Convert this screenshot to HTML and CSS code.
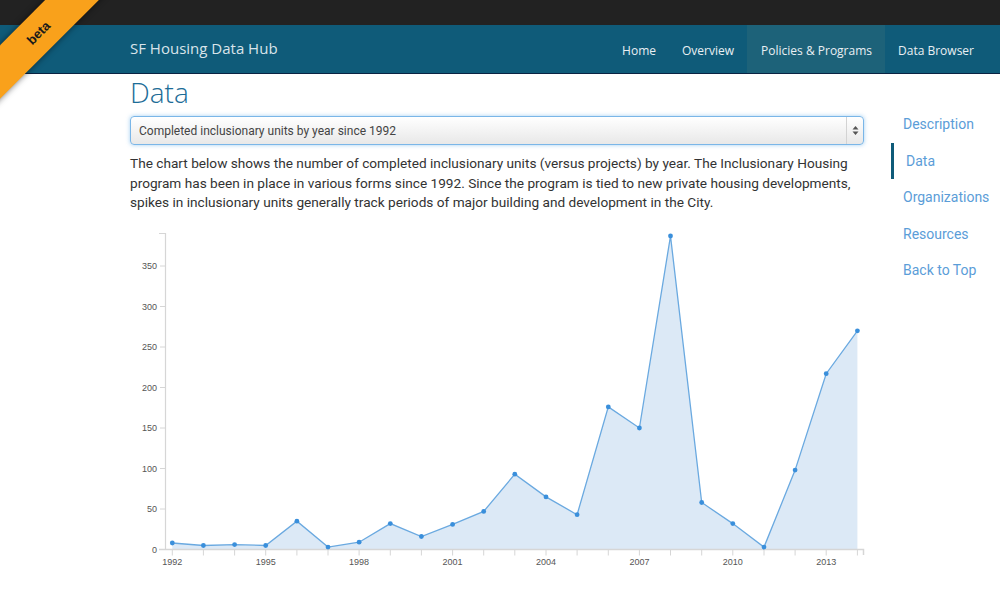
FILE: index.html
```html
<!DOCTYPE html>
<html>
<head>
<meta charset="utf-8">
<link rel="stylesheet" href="styles.css">
</head>
<body>
<div class="ribbon">beta</div>
<div class="topbar"></div>
<nav class="navbar">
  <a class="brand" href="#">SF Housing Data Hub</a>
  <ul class="nav">
    <li><a href="#">Home</a></li>
    <li><a href="#">Overview</a></li>
    <li class="active"><a href="#">Policies &amp; Programs</a></li>
    <li><a href="#">Data Browser</a></li>
  </ul>
</nav>
<div class="layout">
  <main class="main">
    <h1 class="title">Data</h1>
    <div class="select">
      <span class="select-text">Completed inclusionary units by year since 1992</span>
      <span class="select-arrow">
        <svg width="7" height="11" viewBox="0 0 7 11"><path d="M3.5 1 L6.5 4.5 L0.5 4.5 Z M3.5 10 L6.5 6.5 L0.5 6.5 Z" fill="#555"/></svg>
      </span>
    </div>
    <p class="desc">The chart below shows the number of completed inclusionary units (versus projects) by year. The Inclusionary Housing program has been in place in various forms since 1992. Since the program is tied to new private housing developments, spikes in inclusionary units generally track periods of major building and development in the City.</p>
    <svg class="chart" width="740" height="360" viewBox="0 0 740 360">
      <g class="yaxis" font-family="Liberation Sans, Arial, sans-serif" font-size="9" fill="#555">
        <path d="M29 11.5 H35.5 V327.5 H29" fill="none" stroke="#d6d6d6" stroke-width="1.2"/>
        <line x1="30" y1="327.5" x2="35" y2="327.5" stroke="#d6d6d6"/>
        <line x1="30" y1="287" x2="35" y2="287" stroke="#d6d6d6"/>
        <line x1="30" y1="246.5" x2="35" y2="246.5" stroke="#d6d6d6"/>
        <line x1="30" y1="206" x2="35" y2="206" stroke="#d6d6d6"/>
        <line x1="30" y1="165.5" x2="35" y2="165.5" stroke="#d6d6d6"/>
        <line x1="30" y1="125" x2="35" y2="125" stroke="#d6d6d6"/>
        <line x1="30" y1="84.5" x2="35" y2="84.5" stroke="#d6d6d6"/>
        <line x1="30" y1="44" x2="35" y2="44" stroke="#d6d6d6"/>
        <text x="27" y="330.5" text-anchor="end">0</text>
        <text x="27" y="290" text-anchor="end">50</text>
        <text x="27" y="249.5" text-anchor="end">100</text>
        <text x="27" y="209" text-anchor="end">150</text>
        <text x="27" y="168.5" text-anchor="end">200</text>
        <text x="27" y="128" text-anchor="end">250</text>
        <text x="27" y="87.5" text-anchor="end">300</text>
        <text x="27" y="47" text-anchor="end">350</text>
      </g>
      <polygon fill="#dce9f6" points="42.3,327.5 42.3,321.0 73.4,323.5 104.6,322.6 135.7,323.5 166.9,299.2 198.0,325.1 229.1,320.2 260.3,301.6 291.4,314.5 322.6,302.4 353.7,289.4 384.8,252.2 416.0,274.9 447.1,292.7 478.3,184.9 509.4,206.0 540.5,14.0 571.7,280.5 602.8,301.6 634.0,325.1 665.1,248.1 696.2,151.7 727.4,108.8 727.4,327.5"/>
      <g class="xaxis" font-family="Liberation Sans, Arial, sans-serif" font-size="9" fill="#555">
        <path d="M29 327.5 H733.5 V333" fill="none" stroke="#d6d6d6" stroke-width="1.5"/>
        <path stroke="#d6d6d6" stroke-width="1" d="M42.3 327.5 v6 M73.4 327.5 v6 M104.6 327.5 v6 M135.7 327.5 v6 M166.9 327.5 v6 M198.0 327.5 v6 M229.1 327.5 v6 M260.3 327.5 v6 M291.4 327.5 v6 M322.6 327.5 v6 M353.7 327.5 v6 M384.8 327.5 v6 M416.0 327.5 v6 M447.1 327.5 v6 M478.3 327.5 v6 M509.4 327.5 v6 M540.5 327.5 v6 M571.7 327.5 v6 M602.8 327.5 v6 M634.0 327.5 v6 M665.1 327.5 v6 M696.2 327.5 v6 M727.4 327.5 v6"/>
        <text x="42.3" y="343" text-anchor="middle">1992</text>
        <text x="135.7" y="343" text-anchor="middle">1995</text>
        <text x="229.1" y="343" text-anchor="middle">1998</text>
        <text x="322.6" y="343" text-anchor="middle">2001</text>
        <text x="416.0" y="343" text-anchor="middle">2004</text>
        <text x="509.4" y="343" text-anchor="middle">2007</text>
        <text x="602.8" y="343" text-anchor="middle">2010</text>
        <text x="696.2" y="343" text-anchor="middle">2013</text>
      </g>
      <polyline fill="none" stroke="#6aa9e0" stroke-width="1.3" points="42.3,321.0 73.4,323.5 104.6,322.6 135.7,323.5 166.9,299.2 198.0,325.1 229.1,320.2 260.3,301.6 291.4,314.5 322.6,302.4 353.7,289.4 384.8,252.2 416.0,274.9 447.1,292.7 478.3,184.9 509.4,206.0 540.5,14.0 571.7,280.5 602.8,301.6 634.0,325.1 665.1,248.1 696.2,151.7 727.4,108.8"/>
      <g fill="#3a8fdb">
        <circle cx="42.3" cy="321.0" r="2.4"/><circle cx="73.4" cy="323.5" r="2.4"/><circle cx="104.6" cy="322.6" r="2.4"/><circle cx="135.7" cy="323.5" r="2.4"/><circle cx="166.9" cy="299.2" r="2.4"/><circle cx="198.0" cy="325.1" r="2.4"/><circle cx="229.1" cy="320.2" r="2.4"/><circle cx="260.3" cy="301.6" r="2.4"/><circle cx="291.4" cy="314.5" r="2.4"/><circle cx="322.6" cy="302.4" r="2.4"/><circle cx="353.7" cy="289.4" r="2.4"/><circle cx="384.8" cy="252.2" r="2.4"/><circle cx="416.0" cy="274.9" r="2.4"/><circle cx="447.1" cy="292.7" r="2.4"/><circle cx="478.3" cy="184.9" r="2.4"/><circle cx="509.4" cy="206.0" r="2.4"/><circle cx="540.5" cy="14.0" r="2.4"/><circle cx="571.7" cy="280.5" r="2.4"/><circle cx="602.8" cy="301.6" r="2.4"/><circle cx="634.0" cy="325.1" r="2.4"/><circle cx="665.1" cy="248.1" r="2.4"/><circle cx="696.2" cy="151.7" r="2.4"/><circle cx="727.4" cy="108.8" r="2.4"/>
      </g>
    </svg>
  </main>
  <aside class="side">
    <ul class="sidenav">
      <li><a href="#">Description</a></li>
      <li class="active"><a href="#">Data</a></li>
      <li><a href="#">Organizations</a></li>
      <li><a href="#">Resources</a></li>
      <li><a href="#">Back to Top</a></li>
    </ul>
  </aside>
</div>
</body>
</html>
```
FILE: styles.css
```css
* { box-sizing: border-box; }
html, body { margin: 0; padding: 0; background: #fff; }
body { font-family: Roboto, "Liberation Sans", sans-serif; color: #333; overflow: hidden; }
a { text-decoration: none; }
ul { list-style: none; margin: 0; padding: 0; }

.topbar { height: 25px; background: #222222; }

.navbar {
  height: 49px;
  background: #0f5b79;
  border-bottom: 1.5px solid #0a2343;
  display: flex;
  align-items: stretch;
  justify-content: space-between;
  padding: 0 13px 0 130px;
  font-family: "Open Sans", sans-serif;
}
.brand {
  color: #d9e4ea;
  font-size: 15px;
  display: flex;
  align-items: center;
  padding-bottom: 2px;
}
.nav { display: flex; }
.nav li a {
  display: flex;
  align-items: center;
  height: 100%;
  padding: 2px 13px 0 13px;
  color: #e9eff3;
  font-size: 12px;
}
.nav li.active a { background: #1d6279; padding-left: 14px; }

.ribbon {
  position: absolute;
  left: -64px;
  top: 17px;
  width: 200px;
  height: 38px;
  background: #f9a11b;
  transform: rotate(-45deg);
  box-shadow: 0 0 6px rgba(0,0,0,0.55);
  text-align: center;
  line-height: 38px;
  font-family: "Liberation Sans", Arial, sans-serif;
  font-weight: bold;
  font-size: 13px;
  color: #1a1a1a;
  z-index: 10;
  padding-left: 8px;
}

.layout { display: flex; padding-left: 130px; gap: 27px; }
.main { width: 734px; flex: none; }
.title {
  font-family: "Open Sans", sans-serif;
  font-weight: 300;
  font-size: 28px;
  line-height: 34px;
  color: #1c6c97;
  margin: 1px 0 7px 0;
}
.select {
  height: 29px;
  border: 1px solid #7ab6e8;
  border-radius: 4px;
  box-shadow: 0 0 4px rgba(102,175,233,0.6);
  background: linear-gradient(#ffffff, #e8e8e8);
  display: flex;
  align-items: center;
  justify-content: space-between;
  font-size: 12px;
  color: #444;
}
.select-text { padding-left: 8px; }
.select-arrow {
  width: 17px;
  height: 100%;
  border-left: 1px solid #d3d3d3;
  display: flex;
  align-items: center;
  justify-content: center;
}
.desc {
  font-size: 13.65px;
  line-height: 19.5px;
  margin: 9px 0 0 0;
  color: #333;
}
.chart { display: block; margin-top: 9px; }

.side { flex: 1; padding-top: 32px; }
.sidenav li a {
  display: block;
  height: 36.5px;
  line-height: 36.5px;
  padding-left: 12px;
  font-size: 14px;
  color: #5b9dd8;
}
.sidenav li.active a {
  border-left: 3px solid #0f5b79;
  padding-left: 12px;
  color: #5b9dd8;
}
```
